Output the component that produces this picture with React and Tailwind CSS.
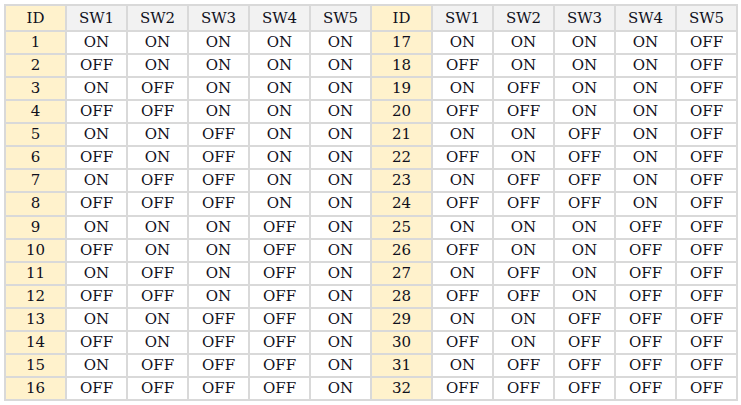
const SWITCHES = [1, 2, 3, 4, 5];

// a switch is OFF when its bit in (id - 1) is set
const state = (id, sw) => (((id - 1) >> (sw - 1)) & 1 ? 'OFF' : 'ON');

const font = { fontFamily: '"DejaVu Serif", "Liberation Serif", serif' };

function Cell({ children, kind }) {
    const bg =
        kind === 'id' || kind === 'idhead'
            ? 'bg-[#fff2cc]'
            : kind === 'head'
              ? 'bg-[#f2f2f2]'
              : 'bg-white';
    const h = kind === 'head' || kind === 'idhead' ? 'h-[24px]' : 'h-[21.07px]';
    return (
        <div className={`${bg} ${h} flex items-center justify-center text-[15px] leading-none text-[#10101c]`}>
            {children}
        </div>
    );
}

export default function App() {
    const rows = Array.from({ length: 16 }, (_, i) => i + 1);

    return (
        <div className="w-[741px] h-[405px] bg-white pt-[4px] pl-[4px]" style={font}>
            <div className="grid grid-cols-[repeat(12,59px)] gap-[2px] p-[2px] bg-[#d9d9d9] w-max">
                {[0, 1].map((half) => (
                    <div key={`h${half}`} className="contents">
                        <Cell kind="idhead">ID</Cell>
                        {SWITCHES.map((sw) => (
                            <Cell key={sw} kind="head">SW{sw}</Cell>
                        ))}
                    </div>
                ))}

                {rows.map((r) => (
                    <div key={r} className="contents">
                        {[r, r + 16].map((id) => (
                            <div key={id} className="contents">
                                <Cell kind="id">{id}</Cell>
                                {SWITCHES.map((sw) => (
                                    <Cell key={sw}>{state(id, sw)}</Cell>
                                ))}
                            </div>
                        ))}
                    </div>
                ))}
            </div>
        </div>
    );
}
